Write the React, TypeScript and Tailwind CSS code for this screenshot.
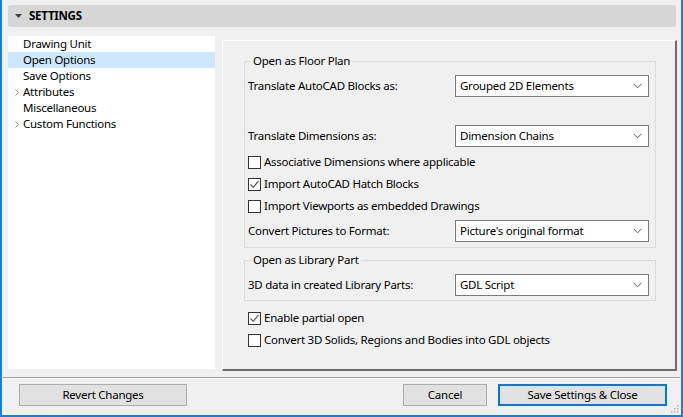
import React from "react";

const font = { fontFamily: '"Noto Sans", "Open Sans", sans-serif' };

function Chevron() {
  return (
    <svg width="9" height="6" viewBox="0 0 9 6" className="shrink-0">
      <path d="M0.5 0.8 L4.5 4.8 L8.5 0.8" fill="none" stroke="#5a5a5a" strokeWidth="1" />
    </svg>
  );
}

function Select({ value }: { value: string }) {
  return (
    <div className="w-[194px] h-[22px] bg-white border border-[#7a7a7a] flex items-center justify-between pl-[4px] pr-[6px] shrink-0">
      <span className="leading-none">{value}</span>
      <Chevron />
    </div>
  );
}

function Checkbox({ checked, label }: { checked?: boolean; label: string }) {
  return (
    <div className="h-[22px] flex items-center">
      <div className="w-[13px] h-[13px] border border-[#333333] bg-white flex items-center justify-center shrink-0">
        {checked && (
          <svg width="11" height="11" viewBox="0 0 11 11">
            <path d="M1.5 5.5 L4.2 8.3 L9.5 2.2" fill="none" stroke="#4a4a4a" strokeWidth="1.1" />
          </svg>
        )}
      </div>
      <span className="ml-[3px]">{label}</span>
    </div>
  );
}

function Row({ label, value }: { label: string; value: string }) {
  return (
    <div className="h-[22px] flex items-center justify-between">
      <span>{label}</span>
      <Select value={value} />
    </div>
  );
}

function TreeArrow() {
  return (
    <svg width="5" height="7" viewBox="0 0 5 7" className="absolute left-[7px] top-[5px]">
      <path d="M0.5 0.5 L3.5 3.5 L0.5 6.5" fill="none" stroke="#8a8a8a" strokeWidth="1" />
    </svg>
  );
}

const items: { label: string; arrow?: boolean; selected?: boolean }[] = [
  { label: "Drawing Unit" },
  { label: "Open Options", selected: true },
  { label: "Save Options" },
  { label: "Attributes", arrow: true },
  { label: "Miscellaneous" },
  { label: "Custom Functions", arrow: true },
];

export default function App() {
  return (
    <div
      className="w-[683px] h-[417px] bg-[#f0f0f0] border-l-2 border-r-2 border-b-2 border-[#1c7fd6] flex flex-col text-[11.5px] tracking-[-0.25px] text-black relative overflow-hidden"
      style={font}
    >
      {/* header */}
      <div className="mt-[5px] ml-[6px] mr-[5px] h-[22px] rounded-[3px] bg-[#d6d6d6] flex items-center">
        <svg width="7" height="4" viewBox="0 0 7 4" className="ml-[7px]">
          <path d="M0 0 L7 0 L3.5 4 Z" fill="#404040" />
        </svg>
        <span className="ml-[7px] font-bold">SETTINGS</span>
      </div>

      {/* body */}
      <div className="flex mt-[9px] h-[334px]">
        <div className="ml-[6px] w-[207px] h-[333px] bg-white">
          {items.map((it) => (
            <div
              key={it.label}
              className={`relative h-[16px] flex items-center pl-[15px] ${it.selected ? "bg-[#cce8ff]" : ""}`}
            >
              {it.arrow && <TreeArrow />}
              <span className="leading-none">{it.label}</span>
            </div>
          ))}
        </div>

        <div className="ml-[7px] mt-[4px] w-[455px] h-[331px] border-t border-l border-white border-r-2 border-b-2 border-r-[#6d6d6d] border-b-[#6d6d6d] pt-[12px] pl-[21px]">
          <fieldset className="w-[412px] border border-[#dcdcdc] px-[3px] pb-[5px]">
            <legend className="ml-[3px] px-[2px] leading-[16px]">Open as Floor Plan</legend>
            <div className="pr-[3px]">
              <div className="mt-[6px]">
                <Row label="Translate AutoCAD Blocks as:" value="Grouped 2D Elements" />
              </div>
              <div className="mt-[28px]">
                <Row label="Translate Dimensions as:" value="Dimension Chains" />
              </div>
              <div className="mt-[4px]">
                <Checkbox label="Associative Dimensions where applicable" />
                <Checkbox checked label="Import AutoCAD Hatch Blocks" />
                <Checkbox label="Import Viewports as embedded Drawings" />
              </div>
              <div className="mt-[3px]">
                <Row label="Convert Pictures to Format:" value="Picture's original format" />
              </div>
            </div>
          </fieldset>

          <fieldset className="mt-[4px] w-[412px] border border-[#dcdcdc] px-[3px] pb-[4px]">
            <legend className="ml-[3px] px-[2px] leading-[16px]">Open as Library Part</legend>
            <div className="pr-[3px] mt-[6px]">
              <Row label="3D data in created Library Parts:" value="GDL Script" />
            </div>
          </fieldset>

          <div className="pl-[4px] mt-[6px]">
            <Checkbox checked label="Enable partial open" />
            <Checkbox label="Convert 3D Solids, Regions and Bodies into GDL objects" />
          </div>
        </div>
      </div>

      {/* separator */}
      <div className="mt-[7px] mx-[1px] h-[1px] bg-[#a0a0a0]" />
      <div className="mx-[1px] h-[1px] bg-white" />

      {/* buttons */}
      <div className="flex items-start mt-[5px]">
        <div className="ml-[17px] w-[168px] h-[22px] bg-[#e1e1e1] border border-[#adadad] flex items-center justify-center">
          Revert Changes
        </div>
        <div className="ml-[216px] w-[84px] h-[22px] bg-[#e1e1e1] border border-[#adadad] flex items-center justify-center">
          Cancel
        </div>
        <div className="ml-[11px] w-[169px] h-[22px] bg-[#e1e1e1] border-2 border-[#0078d7] flex items-center justify-center">
          Save Settings &amp; Close
        </div>
      </div>

      {/* resize grip */}
      <svg width="8" height="8" viewBox="0 0 8 8" className="absolute right-[2px] bottom-[2px]">
        <rect x="6" y="0" width="1.5" height="1.5" fill="#b0b0b0" />
        <rect x="3" y="3" width="1.5" height="1.5" fill="#b0b0b0" />
        <rect x="6" y="3" width="1.5" height="1.5" fill="#b0b0b0" />
        <rect x="0" y="6" width="1.5" height="1.5" fill="#b0b0b0" />
        <rect x="3" y="6" width="1.5" height="1.5" fill="#b0b0b0" />
        <rect x="6" y="6" width="1.5" height="1.5" fill="#b0b0b0" />
      </svg>
    </div>
  );
}
